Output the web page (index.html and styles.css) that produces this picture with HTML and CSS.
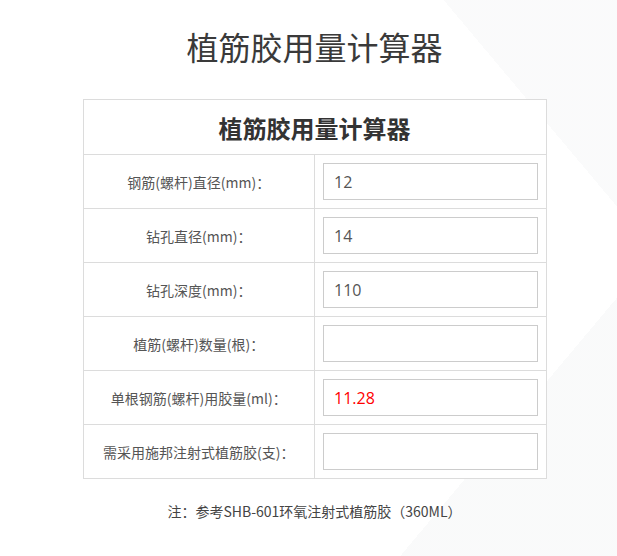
FILE: index.html
```html
<!DOCTYPE html>
<html lang="zh-CN">
<head>
<meta charset="utf-8">
<title>植筋胶用量计算器</title>
<link rel="stylesheet" href="styles.css">
</head>
<body>
<div class="bg-mark"></div>
<main class="page">
  <h1 class="page-title">植筋胶用量计算器</h1>
  <table class="calc">
    <thead>
      <tr><th colspan="2" class="calc-head">植筋胶用量计算器</th></tr>
    </thead>
    <tbody>
      <tr><td class="label">钢筋(螺杆)直径(mm)：</td><td class="field"><input class="box" type="text" value="12"></td></tr>
      <tr><td class="label">钻孔直径(mm)：</td><td class="field"><input class="box" type="text" value="14"></td></tr>
      <tr><td class="label">钻孔深度(mm)：</td><td class="field"><input class="box" type="text" value="110"></td></tr>
      <tr><td class="label">植筋(螺杆)数量(根)：</td><td class="field"><input class="box" type="text" value=""></td></tr>
      <tr><td class="label">单根钢筋(螺杆)用胶量(ml)：</td><td class="field"><input class="box result" type="text" value="11.28"></td></tr>
      <tr><td class="label">需采用施邦注射式植筋胶(支)：</td><td class="field"><input class="box" type="text" value=""></td></tr>
    </tbody>
  </table>
  <p class="note">注：参考SHB-601环氧注射式植筋胶（360ML）</p>
</main>
</body>
</html>
```

FILE: styles.css
```css
html, body {
  margin: 0;
  padding: 0;
  background: #ffffff;
}
body {
  font-family: "Noto Sans CJK SC", "Noto Sans", sans-serif;
  color: #444;
  width: 617px;
  height: 556px;
  overflow: hidden;
  position: relative;
}
.bg-mark {
  position: absolute;
  inset: 0;
  background:
    linear-gradient(130deg, transparent 0 80%, rgba(244,245,246,0.5) 80% 100%),
    linear-gradient(50deg, transparent 0 84%, rgba(244,245,246,0.45) 84% 100%);
  z-index: 0;
}
.page {
  position: relative;
  z-index: 1;
  padding-left: 12px;
  display: flex;
  flex-direction: column;
  align-items: center;
}
.page-title {
  margin: 23px 0 0;
  font-size: 32px;
  line-height: 46px;
  font-weight: normal;
  color: #3a3a3a;
}
.calc {
  margin-top: 30px;
  width: 464px;
  table-layout: fixed;
  border-collapse: collapse;
  background: #fff;
}
.calc td, .calc th {
  border: 1px solid #dcdcdc;
}
.calc-head {
  height: 54px;
  padding: 0;
  font-size: 24px;
  font-weight: bold;
  color: #333;
  text-align: center;
}
.label {
  width: 228px;
  height: 53px;
  padding: 0;
  text-align: center;
  font-size: 14px;
  color: #555;
}
.field {
  padding: 0 9px 0 8px;
  height: 53px;
}
.box {
  display: block;
  box-sizing: border-box;
  width: 215px;
  height: 37px;
  margin: 0;
  border: 1px solid #cccccc;
  border-radius: 0;
  padding: 0 10px;
  font-family: "Open Sans", "Noto Sans", sans-serif;
  font-size: 16px;
  color: #555;
  background: #fff;
  outline: none;
}
.result {
  color: #ff0000;
}
.note {
  margin: 22px 0 0;
  font-size: 14px;
  line-height: 20px;
  color: #444;
}
```
